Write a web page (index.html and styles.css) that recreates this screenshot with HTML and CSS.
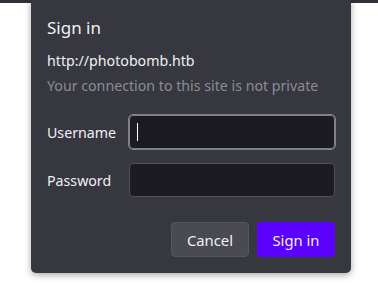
FILE: index.html
```html
<!DOCTYPE html>
<html lang="en">
  <head>
    <meta charset="UTF-8" />
    <title>Sign in</title>
    <link rel="stylesheet" href="styles.css">
  </head>
  <body>
    <!-- Auth prompt -->
    <div class="dialog">
      <h2 class="title">Sign in</h2>
      <p class="site">http://photobomb.htb</p>
      <p class="note">Your connection to this site is not private</p>
      <div class="form">
        <label class="label">Username</label>
        <div class="field focused"><span class="caret"></span></div>
        <label class="label">Password</label>
        <div class="field"></div>
      </div>
      <div class="actions">
        <button class="btn cancel">Cancel</button>
        <button class="btn primary">Sign in</button>
      </div>
    </div>
  </body>
</html>
```

FILE: styles.css
```css
* {
  margin: 0;
  padding: 0;
  box-sizing: border-box;
  font-family: "Noto Sans", sans-serif;
}

body {
  background: linear-gradient(#30323a 3px, #ffffff 3px);
  height: 289px;
  overflow: hidden;
}

.dialog {
  width: 320px;
  margin-left: 31px;
  padding: 16px 16px 16px 16px;
  background: #36373f;
  border-radius: 0 0 5px 5px;
  box-shadow: 0 2px 7px rgba(0, 0, 0, 0.35);
  color: #f0f0f4;
}

.title {
  font-size: 17px;
  font-weight: normal;
  line-height: 24px;
}

.site {
  margin-top: 11px;
  font-size: 14.2px;
  line-height: 20px;
}

.note {
  margin-top: 5px;
  font-size: 14.2px;
  line-height: 20px;
  color: #8c8d94;
}

/* Username / password rows */
.form {
  margin-top: 19px;
  display: grid;
  grid-template-columns: 82px 1fr;
  row-gap: 14px;
  align-items: center;
}

.label {
  font-size: 14.2px;
}

.field {
  height: 34px;
  background: #1c1b22;
  border: 1px solid #4e4f57;
  border-radius: 4px;
  display: flex;
  align-items: center;
  padding-left: 7px;
}

.field.focused {
  border-color: #80828b;
  outline: 1px solid #80828b;
}

.caret {
  width: 1px;
  height: 18px;
  background: #ffffff;
}

.actions {
  margin-top: 25px;
  display: flex;
  justify-content: flex-end;
  gap: 8px;
}

.btn {
  width: 78px;
  height: 35px;
  border-radius: 4px;
  font-size: 14.8px;
  color: #f0f0f4;
  border: 1px solid transparent;
}

.cancel {
  background: #4a4b51;
  border-color: #55565c;
}

.primary {
  background: #5b00ff;
}
```
